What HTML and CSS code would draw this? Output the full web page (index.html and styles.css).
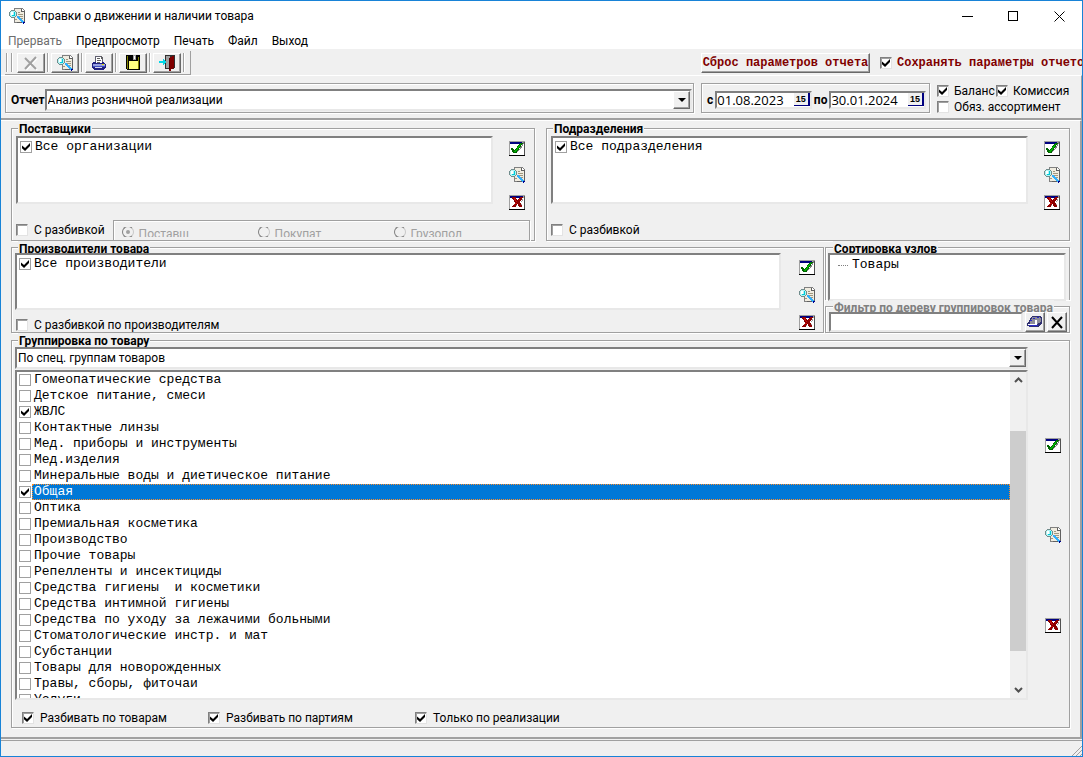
FILE: index.html
```
<!DOCTYPE html>
<html lang="ru">
<head>
<meta charset="utf-8">
<title>Справки о движении и наличии товара</title>
<link rel="stylesheet" href="styles.css">
</head>
<body>
<svg class="sprite" aria-hidden="true">
  <symbol id="i-check" viewBox="0 0 16 15">
    <path fill="#a0a0a0" d="M0 0h16v14H0z"/><path fill="#fff" d="M1 3h14v11H1z"/>
    <path fill="#000080" d="M1 1h12v2H1z"/><path fill="#000" d="M0 14h16v1H0z"/><path fill="#505050" d="M15 1h1v13h-1z"/>
    <path fill="#808080" d="M5 12h3v-1h1v-1h1V9h1V8h1V7h1V5h1V3h1V1h-1v2h-1v2h-1v1h-1v2h-1v1H9v1H8v2H5z"/>
    <path fill="#006400" d="M2 7h2v1h1v1h1V8h1V7h1V5h1V4h1V3h1V2h3v1h-1v1h-1v2h-1v1h-1v2H9v1H8v2H4v-1H3V9H2z"/>
    <path fill="#00b400" d="M3 8h1v2h2V9h1V8h1V6h1V5h1V4h1V3h1v1h-1v2h-1v1H9v2H8v1H7v1H5v-1H4z"/>
  </symbol>
  <symbol id="i-cross" viewBox="0 0 16 15">
    <path fill="#a0a0a0" d="M0 0h16v14H0z"/><path fill="#fff" d="M1 3h14v11H1z"/>
    <path fill="#000080" d="M1 1h13v2H1z"/><path fill="#000" d="M0 14h16v1H0z"/><path fill="#505050" d="M15 1h1v13h-1z"/>
    <path fill="#a0a0a0" d="M6 12h1v-1h1v-1h1v1h1v1h3V9h-1V7h1V6h1V4h-1v2h-1v2h-1v2H8z"/>
    <path fill="#8c0000" d="M3 2h4v2h1v1h1V4h1V3h1V2h3v1h-1v2h-1v1h-1v2h1v2h1v2h-3v-1H9V9H8v1H7v2H3v-1h1v-1h1V9h1V7H5V5H4V4H3z"/>
    <path fill="#c81010" d="M5 3h1v1h1v2h1v1H7V6H6V5H5zM7 8h1v1H6v1H5V9h1zM10 4h1v1h-1z"/>
  </symbol>
  <symbol id="i-find" viewBox="0 0 16 16">
    <path fill="#808080" d="M5 0h9v1h1v1h1v13H5z"/><path fill="#f0ece0" d="M6 1h7v3h2v10H6z"/>
    <path fill="#fff" d="M13 1h1v1h1v1h-2z"/><path fill="#606060" d="M15 3h1v12H8v-1h7zM12 1h1v2h2v1h-3z"/>
    <path fill="#a09880" d="M9 4h2v1H9zM9 6h5v1H9zM10 8h4v1h-4zM6 11h2v1H6zM12 10h2v1h-2z"/>
    <path fill="#708c8c" d="M2 2h4v1h1v1h1v4H7v1H6v1H2V9H1V8H0V4h1V3h1z"/>
    <path fill="#b0f4f4" d="M2 3h4v1h1v4H6v1H2V8H1V4h1z"/><path fill="#fff" d="M2 4h2v3H2z"/><path fill="#00c8d8" d="M5 4h1v4H3V7h2z"/>
    <path fill="#000090" d="M7 9h1v1h1v1h1v1h1v1h1v1h1v1h1v1h1v-1h1v-1h-1v-1h-1v-1h-1v-1h-1v-1h-1V9h-1V8H8v1z"/>
    <path fill="#30b0ff" d="M8 8h2v1h1v1h1v1h1v1h1v1h1v1h-1v1h-1v-1h-1v-1h-1v-1h-1v-1H9v-1H8z"/>
  </symbol>
  <symbol id="i-stop" viewBox="0 0 16 16">
    <path fill="none" stroke="#fff" stroke-width="2" d="M3 4l11 11M14 3L3 15"/>
    <path fill="none" stroke="#a0a0a0" stroke-width="2" d="M2 3l11 11M13 2L2 14"/>
  </symbol>
  <symbol id="i-print" viewBox="0 0 16 16">
    <path fill="#606070" d="M4 1h7v1h1v6H4z"/><path fill="#202080" d="M2 7h11v1h1v1h1v4h-1v1h-1v1H3v-1H2v-1H1V8h1z"/><path fill="#fff" d="M5 2h5v1h1v5H5z"/>
    <path fill="#606060" d="M6 3h3v1H6zM6 5h4v1H6zM6 7h3v1H6zM10 1h1v2h1v1h-2z"/>
    <path fill="#98a0e0" d="M2 9h12v2H2z"/><path fill="#4050c0" d="M2 11h12v1H2z"/><path fill="#d8d8f0" d="M4 12h7v1H4z"/><path fill="#e0e000" d="M11 9h2v1h-2z"/>
  </symbol>
  <symbol id="i-save" viewBox="0 0 16 16">
    <path fill="#000" d="M1 0h14v15H2v-1H1z"/><path fill="#808000" d="M2 1h1v13H2zM13 2h1v12h-1z"/>
    <path fill="#a0a0a0" d="M4 0h7v5H4z"/><path fill="#000" d="M4 0h4v5H4z"/><path fill="#fff" d="M9 1h1v3H9z"/>
    <path fill="#ffff80" d="M4 6h9v8H4z"/>
  </symbol>
  <symbol id="i-exit" viewBox="0 0 16 16">
    <path fill="#303030" d="M6 0h10v13h-1v1H6z"/><path fill="#a0a0a0" d="M7 1h4v12H7z"/>
    <path fill="#800000" d="M10 3h1V2h2V1h2v12h-1v1h-2v2h-2z"/><path fill="#500000" d="M10 3h1v12h-1z"/>
    <path fill="#00d8e8" d="M0 6h4V4h1v1h1v1h1v2H6v1H5v1H4V8H0z"/>
  </symbol>
  <symbol id="i-erase" viewBox="0 0 16 14">
    <path fill="#303070" d="M5 1h9v1h1v7h-1v1h-1v1h-1v1H2v-1H0V8h1V7h1V5h1V3h1V2h1z"/>
    <path fill="#8c8c98" d="M5 2h8v1h1v4h-1v1h-2v1H3V6h1V4h1z"/><path fill="#fff" d="M8 5h2v4H8zM1 9h9v1H1z"/>
    <path fill="#2828c8" d="M6 3h2v1H6zM10 2h2v1h-2zM3 5h2v1H3zM2 10h9v1H2z"/>
  </symbol>
</svg>

<div class="window">
  <header class="titlebar">
    <svg class="ico"><use href="#i-find"/></svg>
    <h1 class="title">Справки о движении и наличии товара</h1>
    <div class="winbtns">
      <button aria-label="Свернуть"><svg viewBox="0 0 11 11"><path d="M0 5.5h11"/></svg></button>
      <button aria-label="Развернуть"><svg viewBox="0 0 11 11"><path d="M.5.5h9v9h-9z"/></svg></button>
      <button aria-label="Закрыть"><svg class="smooth" viewBox="0 0 11 11"><path d="M.5.5l10 10M10.5.5l-10 10"/></svg></button>
    </div>
  </header>
  <nav class="menu">
    <button disabled>Прервать</button><button>Предпросмотр</button><button>Печать</button><button>Файл</button><button>Выход</button>
  </nav>

  <div class="toolrow">
    <div class="toolbar">
      <span class="grip"></span><span class="grip"></span>
      <button class="raised tool" aria-label="Прервать" disabled><svg class="ico smooth"><use href="#i-stop"/></svg></button>
      <span class="grip"></span>
      <button class="raised tool" aria-label="Предпросмотр"><svg class="ico"><use href="#i-find"/></svg></button>
      <span class="grip"></span>
      <button class="raised tool" aria-label="Печать"><svg class="ico"><use href="#i-print"/></svg></button>
      <span class="grip"></span>
      <button class="raised tool" aria-label="Сохранить"><svg class="ico"><use href="#i-save"/></svg></button>
      <span class="grip"></span>
      <button class="raised tool" aria-label="Выход"><svg class="ico"><use href="#i-exit"/></svg></button>
      <span class="grip"></span>
    </div>
    <button class="raised reset">Сброс параметров отчета</button>
    <label class="keep"><input type="checkbox" checked> Сохранять параметры отчетов</label>
  </div>

  <section class="params">
    <div class="etched report">
      <label for="report">Отчет</label>
      <div class="combo"><select id="report"><option>Анализ розничной реализации</option></select><span class="raised arrow"></span></div>
    </div>
    <div class="etched dates">
      <label for="from">с</label>
      <div class="sunken date"><input id="from" type="text" value="01.08.2023"><button class="cal" aria-label="Календарь">15</button></div>
      <label for="to">по</label>
      <div class="sunken date"><input id="to" type="text" value="30.01.2024"><button class="cal" aria-label="Календарь">15</button></div>
    </div>
    <div class="flags">
      <label><input type="checkbox" checked>Баланс</label>
      <label><input type="checkbox" checked>Комиссия</label>
      <label class="wide"><input type="checkbox">Обяз. ассортимент</label>
    </div>
  </section>

  <main class="main">
    <div class="row two">
      <fieldset class="group g-top">
        <legend>Поставщики</legend>
        <div class="body">
          <ul class="sunken list"><li><label><input type="checkbox" checked><span>Все организации</span></label></li></ul>
          <div class="side">
            <button aria-label="Отметить все"><svg class="ico"><use href="#i-check"/></svg></button>
            <button aria-label="Найти"><svg class="ico"><use href="#i-find"/></svg></button>
            <button aria-label="Снять все"><svg class="ico"><use href="#i-cross"/></svg></button>
          </div>
        </div>
        <div class="foot">
          <label class="opt"><input type="checkbox">С разбивкой</label>
          <div class="etched radios">
            <label><input type="radio" name="by" checked disabled>Поставщ</label>
            <label><input type="radio" name="by" disabled>Покупат</label>
            <label><input type="radio" name="by" disabled>Грузопол</label>
          </div>
        </div>
      </fieldset>
      <fieldset class="group g-top">
        <legend>Подразделения</legend>
        <div class="body">
          <ul class="sunken list"><li><label><input type="checkbox" checked><span>Все подразделения</span></label></li></ul>
          <div class="side">
            <button aria-label="Отметить все"><svg class="ico"><use href="#i-check"/></svg></button>
            <button aria-label="Найти"><svg class="ico"><use href="#i-find"/></svg></button>
            <button aria-label="Снять все"><svg class="ico"><use href="#i-cross"/></svg></button>
          </div>
        </div>
        <div class="foot"><label class="opt"><input type="checkbox">С разбивкой</label></div>
      </fieldset>
    </div>

    <div class="row mid">
      <fieldset class="group g-mid">
        <legend>Производители товара</legend>
        <div class="body">
          <div class="stack">
            <ul class="sunken list"><li><label><input type="checkbox" checked><span>Все производители</span></label></li></ul>
            <label class="opt"><input type="checkbox">С разбивкой по производителям</label>
          </div>
          <div class="side">
            <button aria-label="Отметить все"><svg class="ico"><use href="#i-check"/></svg></button>
            <button aria-label="Найти"><svg class="ico"><use href="#i-find"/></svg></button>
            <button aria-label="Снять все"><svg class="ico"><use href="#i-cross"/></svg></button>
          </div>
        </div>
      </fieldset>
      <div class="right">
        <fieldset class="group g-sort">
          <legend>Сортировка узлов</legend>
          <ul class="sunken tree"><li>Товары</li></ul>
        </fieldset>
        <fieldset class="group g-filter">
          <legend>Фильтр по дереву группировок товара</legend>
          <div class="filter">
            <input class="sunken" type="text" aria-label="Фильтр">
            <button class="raised" aria-label="Очистить"><svg class="ico"><use href="#i-erase"/></svg></button>
            <button class="raised" aria-label="Удалить"><svg class="ico smooth x" viewBox="0 0 16 16"><path d="M3 3l10 11M13 3L3 14"/></svg></button>
          </div>
        </fieldset>
      </div>
    </div>

    <fieldset class="group g-goods">
      <legend>Группировка по товару</legend>
      <div class="body">
        <div class="stack">
          <div class="combo"><select aria-label="Группировка"><option>По спец. группам товаров</option></select><span class="raised arrow"></span></div>
          <div class="sunken scroller">
            <ul class="items">
              <li><label><input type="checkbox"><span>Гомеопатические средства</span></label></li>
              <li><label><input type="checkbox"><span>Детское питание, смеси</span></label></li>
              <li><label><input type="checkbox" checked><span>ЖВЛС</span></label></li>
              <li><label><input type="checkbox"><span>Контактные линзы</span></label></li>
              <li><label><input type="checkbox"><span>Мед. приборы и инструменты</span></label></li>
              <li><label><input type="checkbox"><span>Мед.изделия</span></label></li>
              <li><label><input type="checkbox"><span>Минеральные воды и диетическое питание</span></label></li>
              <li class="current"><label><input type="checkbox" checked><span>Общая</span></label></li>
              <li><label><input type="checkbox"><span>Оптика</span></label></li>
              <li><label><input type="checkbox"><span>Премиальная косметика</span></label></li>
              <li><label><input type="checkbox"><span>Производство</span></label></li>
              <li><label><input type="checkbox"><span>Прочие товары</span></label></li>
              <li><label><input type="checkbox"><span>Репелленты и инсектициды</span></label></li>
              <li><label><input type="checkbox"><span>Средства гигиены  и косметики</span></label></li>
              <li><label><input type="checkbox"><span>Средства интимной гигиены</span></label></li>
              <li><label><input type="checkbox"><span>Средства по уходу за лежачими больными</span></label></li>
              <li><label><input type="checkbox"><span>Стоматологические инстр. и мат</span></label></li>
              <li><label><input type="checkbox"><span>Субстанции</span></label></li>
              <li><label><input type="checkbox"><span>Товары для новорожденных</span></label></li>
              <li><label><input type="checkbox"><span>Травы, сборы, фиточаи</span></label></li>
              <li><label><input type="checkbox"><span>Услуги</span></label></li>
            </ul>
            <div class="scrollbar" aria-hidden="true">
              <svg viewBox="0 0 9 6"><path d="M1 5l3.500-3.500L8 5"/></svg>
              <div class="track"><div class="thumb"></div></div>
              <svg viewBox="0 0 9 6"><path d="M1 1l3.500 3.500L8 1"/></svg>
            </div>
          </div>
        </div>
        <div class="side">
          <button aria-label="Отметить все"><svg class="ico"><use href="#i-check"/></svg></button>
          <button aria-label="Найти"><svg class="ico"><use href="#i-find"/></svg></button>
          <button aria-label="Снять все"><svg class="ico"><use href="#i-cross"/></svg></button>
        </div>
      </div>
      <div class="splits">
        <label class="opt"><input type="checkbox" checked>Разбивать по товарам</label>
        <label class="opt"><input type="checkbox" checked>Разбивать по партиям</label>
        <label class="opt"><input type="checkbox" checked>Только по реализации</label>
      </div>
    </fieldset>
  </main>
  <footer class="status"><svg viewBox="0 0 10 10"><path d="M0 10L10 0M4 10l6-6M8 10l2-2"/></svg></footer>
</div>
</body>
</html>
```
FILE: styles.css
```
* { box-sizing: border-box; }
body { margin: 0; font: 12px/16px Roboto, "Open Sans", sans-serif; color: #000; }
ul { list-style: none; margin: 0; padding: 0; }
button, input, select { font: inherit; color: inherit; margin: 0; padding: 0; border: 0; background: none; border-radius: 0; }
label { display: flex; align-items: center; white-space: nowrap; }
.sprite { display: none; }
.ico { display: block; width: 16px; height: 16px; shape-rendering: crispEdges; }
.smooth { shape-rendering: auto; }

.window { height: 100vh; min-height: 640px; display: flex; flex-direction: column; border: 1px solid #1883d7; background: #f0f0f0; overflow: hidden; }

/* Bevels */
.raised { background: #f0f0f0; border: 1px solid; border-color: #fff #696969 #696969 #fff; box-shadow: inset -1px -1px 0 #a0a0a0; }
.sunken { background: #fff; border: 2px solid; border-color: #808080 #e8e8e8 #e8e8e8 #808080; }
.etched { border: 1px solid #a0a0a0; box-shadow: 1px 1px 0 #fff, inset 1px 1px 0 #fff; }

/* Check boxes and radios */
input[type="checkbox"] { appearance: none; flex: none; width: 12px; height: 12px; background: #fff; border: 1px solid; border-color: #808080 #e3e3e3 #e3e3e3 #808080; box-shadow: inset 1px 1px 0 #a0a0a0; display: grid; place-content: center; }
input[type="checkbox"]:checked::before { content: ""; width: 8px; height: 8px; background: #000; clip-path: polygon(0 30%, 38% 62%, 100% 0, 100% 38%, 38% 100%, 0 65%); }
input[type="radio"] { appearance: none; flex: none; width: 12px; height: 12px; margin-top: -1px; border: 1px solid #808080; border-right-color: #c8c8c8; border-radius: 50%; display: grid; place-content: center; }
input[type="radio"]:checked::before { content: ""; width: 4px; height: 4px; border-radius: 50%; background: #a0a0a0; }
.opt { gap: 6px; }

/* Title and menu */
.titlebar, .menu, .toolrow, .params { flex: none; }
.titlebar { display: flex; align-items: center; height: 30px; padding-left: 8px; background: #fff; }
.title { flex: 1; margin: 0 0 0 8px; font-size: 12px; font-weight: 400; }
.winbtns { display: flex; }
.winbtns button { width: 46px; height: 28px; display: grid; place-content: center; }
.winbtns svg { width: 11px; height: 11px; fill: none; stroke: #000; shape-rendering: crispEdges; }
.winbtns svg.smooth { shape-rendering: auto; }
.menu { display: flex; gap: 14px; height: 18px; padding: 2px 0 0 7px; background: #fff; }
.menu button:disabled { color: #6d6d6d; }

/* Toolbar */
.toolrow { display: flex; align-items: center; height: 26px; padding: 2px 0 0 4px; overflow: hidden; }
.toolbar { display: flex; align-items: center; gap: 2px; height: 24px; padding: 0 5px 0 1px; border-right: 1px solid #a0a0a0; border-bottom: 1px solid #a0a0a0; margin-right: auto; }
.grip { width: 2px; height: 19px; border-left: 1px solid #a0a0a0; border-right: 1px solid #fff; }
.grip + .grip { margin: 0 2px 0 1px; }
.tool { width: 28px; height: 20px; padding: 0 5px; }
.reset { width: 169px; height: 20px; white-space: nowrap; }
.reset, .keep { font: bold 12px/16px "Liberation Mono", monospace; color: #800000; }
.keep { width: 202px; margin-left: 10px; gap: 5px; overflow: hidden; }

/* Report parameters */
.params { display: flex; gap: 7px; height: 45px; padding: 7px 0 7px 4px; border-top: 1px solid #fff; border-bottom: 2px solid #a0a0a0; border-right: 1px solid #a0a0a0; }
.params .etched { display: flex; align-items: center; height: 30px; }
.report { flex: 1; padding: 4px 1px 0 5px; font-weight: 700; }
.combo { flex: 1; display: grid; height: 22px; font-weight: 400; background: #fff; border: 2px solid; border-color: #808080 #e8e8e8 #e8e8e8 #808080; }
.combo > * { grid-area: 1 / 1; }
.combo select { appearance: none; width: 100%; padding: 0 20px 0 1px; outline: none; }
.arrow { justify-self: end; width: 17px; display: grid; place-content: center; pointer-events: none; }
.arrow::before { content: ""; border: 4px solid transparent; border-top-color: #000; border-bottom: 0; }
.dates { width: 229px; padding: 4px 3px 0 5px; gap: 2px; font-weight: 700; }
.date { flex: 1; display: flex; height: 18px; font: 13px/14px "Open Sans", sans-serif; }
.date input { flex: 1; width: 0; }
.cal { width: 16px; height: 13px; font: bold 9px/11px "Liberation Sans", sans-serif; background: #f0f0f0; border-right: 2px solid #000080; border-bottom: 1px solid #000080; }
.flags { display: grid; grid-template-columns: 59px 78px; align-content: start; width: 144px; }
.flags label { gap: 5px; }
.flags .wide { grid-column: 1 / 3; }

/* Group boxes */
.main { flex: 1; min-height: 0; display: flex; flex-direction: column; padding: 0 10px 9px 10px; border-top: 1px solid #fff; border-right: 2px solid #a0a0a0; border-bottom: 2px solid #a0a0a0; }
.group { min-width: 0; margin: 0; padding: 0 0 0 4px; border: 1px solid #a0a0a0; box-shadow: 1px 1px 0 #fff, inset 1px 1px 0 #fff; }
.group legend { height: 15px; margin-left: 2px; padding: 0 1px; font-weight: 700; line-height: 16px; background: #f0f0f0; overflow: hidden; white-space: nowrap; }
.row { display: grid; flex: none; }
.two { grid-template-columns: 1fr 1fr; gap: 11px; }
.mid { grid-template-columns: 1fr 245px; gap: 1px; }
.body { display: flex; }
.list, .scroller, .tree { font: 13px/16px "Liberation Mono", monospace; }
.list { flex: 1; height: 68px; }
.list label, .items label { gap: 3px; }
.list input[type="checkbox"], .items input[type="checkbox"] { border-color: #a0a0a0; box-shadow: none; }
.list span, .items span { white-space: pre; }
.list label { padding: 1px 0 0 2px; }
.side { width: 41px; display: flex; flex-direction: column; align-items: center; justify-content: space-between; }
.side button { width: 16px; height: 16px; }
.g-top { height: 120px; }
.g-top .body { height: 75px; }
.g-top .side { padding: 4px 0 0 6px; height: 74px; }
.foot { display: flex; align-items: center; gap: 8px; height: 22px; margin-top: 8px; }
.radios { flex: 1; display: grid; grid-template-columns: repeat(3, 136px); align-items: center; height: 21px; margin-right: 4px; padding: 4px 0 0 8px; color: #a0a0a0; overflow: hidden; }
.radios label { gap: 5px; height: 10px; overflow: hidden; align-items: flex-start; line-height: 14px; }
.g-mid { height: 92px; }
.g-mid legend, .g-sort legend, .g-filter legend { height: 12px; }
.g-mid .side { width: 42px; height: 77px; padding: 6px 0 0 10px; }
.stack { flex: 1; min-width: 0; display: flex; flex-direction: column; }
.g-mid .list { flex: none; height: 57px; }
.g-mid .opt { height: 24px; padding: 6px 0 0 1px; }
.g-mid, .g-goods { padding-left: 3px; }
.g-mid legend, .g-goods legend { margin-left: 3px; }
.right { display: flex; flex-direction: column; min-width: 0; }
.g-sort { height: 59px; padding: 0 3px 0 2px; border-bottom: 0; }
.g-sort legend { margin-left: 5px; }
.tree { height: 48px; padding-top: 2px; }
.tree li { display: flex; align-items: center; gap: 4px; padding-left: 8px; }
.tree li::before { content: ""; width: 10px; border-top: 1px dotted #808080; }
.g-filter { height: 33px; padding: 0 2px 0 3px; }
.g-filter legend { margin-left: 4px; color: #808080; }
.filter { display: flex; gap: 2px; height: 20px; }
.filter input { flex: 1; width: 0; }
.filter button { width: 20px; padding: 0 1px; }
.ico.x { fill: none; stroke: #000; stroke-width: 2px; }
.g-goods { flex: 1; min-height: 0; display: flex; flex-direction: column; }
.g-goods legend { height: 14px; }
.g-goods .body { flex: 1; min-height: 0; }
.g-goods .combo { flex: none; }
.g-goods .side { width: 41px; padding: 90px 0 67px 8px; }
.scroller { flex: 1; min-height: 0; margin-top: 1px; display: flex; overflow: hidden; }
.items { flex: 1; min-width: 0; }
.items label { padding-left: 2px; gap: 1px; }
.items span { flex: 1; padding-left: 2px; }
.current span { color: #fff; background: #0078d7; outline: 1px dotted #ff8c28; outline-offset: -1px; }
.scrollbar { width: 16px; display: flex; flex-direction: column; align-items: center; padding: 5px 0; background: #f0f0f0; }
.scrollbar svg { width: 9px; height: 6px; fill: none; stroke: #505050; stroke-width: 2px; }
.track { flex: 1; width: 100%; padding: 48px 0 36px; }
.thumb { height: 100%; background: #cdcdcd; }
.splits { display: grid; grid-template-columns: 186px 207px 1fr; align-items: center; height: 27px; padding: 9px 0 0 7px; }
.status { display: flex; justify-content: flex-end; align-items: flex-end; height: 16px; margin-top: 1px; border-top: 1px solid #a0a0a0; flex: none; }
.status svg { width: 10px; height: 10px; fill: none; stroke: #a0a0a0; stroke-width: 1px; }
```
